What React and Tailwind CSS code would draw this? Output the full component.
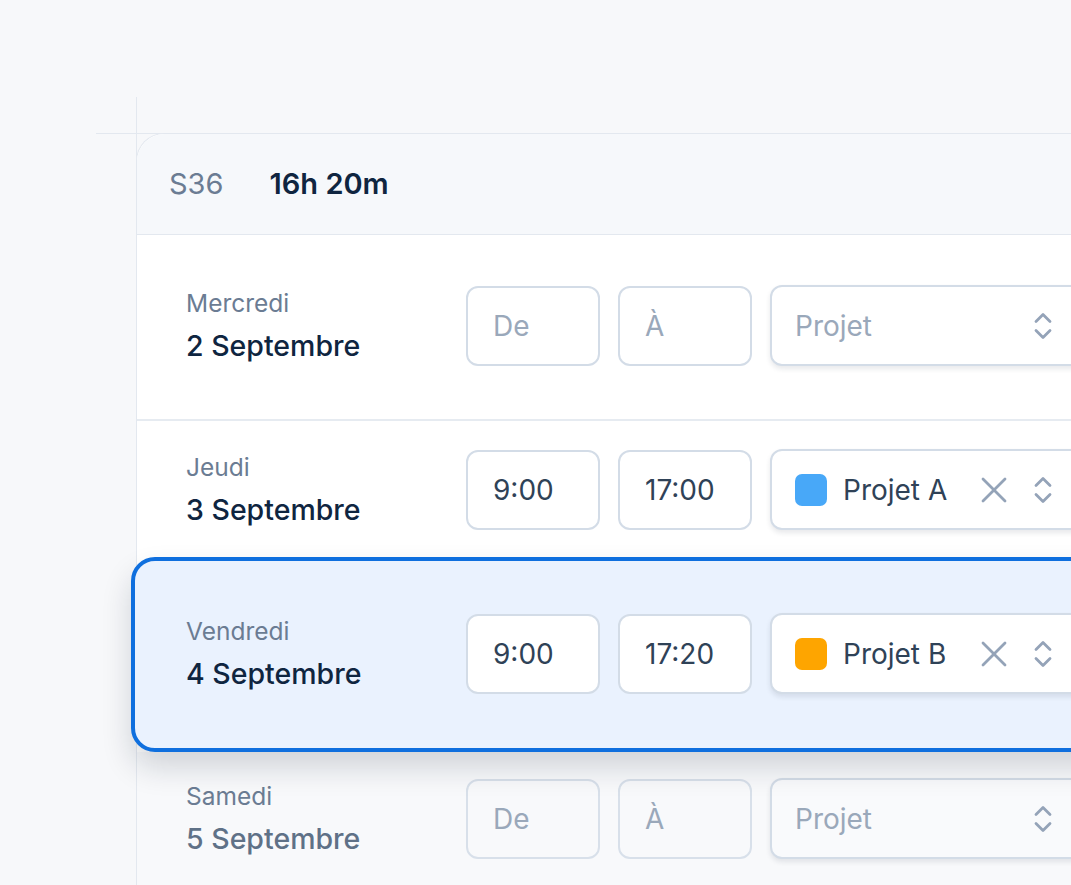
import React from "react";

const Chevrons = () => (
  <svg width="18" height="30" viewBox="0 0 18 30" fill="none" stroke="#94a3b8" strokeWidth="2.8" strokeLinecap="round" strokeLinejoin="round">
    <path d="M2 10.5 L9 3.5 L16 10.5" />
    <path d="M2 19.5 L9 26.5 L16 19.5" />
  </svg>
);

const XIcon = () => (
  <svg width="26" height="26" viewBox="0 0 26 26" fill="none" stroke="#94a3b8" strokeWidth="2.8" strokeLinecap="round">
    <path d="M2 2 L24 24" />
    <path d="M24 2 L2 24" />
  </svg>
);

function TimeBox({ value, placeholder, faded }) {
  return (
    <div
      className={
        "w-[134px] h-[80px] rounded-[12px] border-2 flex items-center pl-[25px] text-[28px] " +
        (faded ? "border-[#d8e0ea] bg-transparent" : "border-[#d3dce7] bg-white")
      }
    >
      {value ? (
        <span className="text-[#2f4257]">{value}</span>
      ) : (
        <span className="text-[#9aa8ba]">{placeholder}</span>
      )}
    </div>
  );
}

function ProjectSelect({ project, faded }) {
  return (
    <div
      className={
        "w-[320px] h-[81px] rounded-[12px] border-2 border-[#d3dce7] flex items-center pl-[23px] pr-[36px] shadow-[0_3px_5px_rgba(30,41,59,0.10)] " +
        (faded ? "bg-[#f9fafc]" : "bg-white")
      }
    >
      {project ? (
        <>
          <div className="w-[32px] h-[32px] rounded-[7px] shrink-0" style={{ background: project.color }} />
          <span className="ml-[16px] text-[28px] text-[#2f4257]">{project.name}</span>
          <div className="ml-auto flex items-center gap-[27px]">
            <XIcon />
            <Chevrons />
          </div>
        </>
      ) : (
        <>
          <span className="text-[28px] text-[#9aa8ba]">Projet</span>
          <div className="ml-auto">
            <Chevrons />
          </div>
        </>
      )}
    </div>
  );
}

function DayLabel({ day, date, faded }) {
  return (
    <div className="w-[280px] shrink-0 flex flex-col gap-[10px]">
      <span className="text-[24.5px] leading-[30px] text-[#6b7c93]">{day}</span>
      <span className={"text-[28.5px] leading-[35px] font-medium " + (faded ? "text-[#5f7187]" : "text-[#0f2540]")}>{date}</span>
    </div>
  );
}

function Row({ day, date, from, to, project, faded }) {
  return (
    <div className="flex items-center">
      <DayLabel day={day} date={date} faded={faded} />
      <div className="flex items-center gap-[18px]">
        <TimeBox value={from} placeholder="De" faded={faded} />
        <TimeBox value={to} placeholder="À" faded={faded} />
        <ProjectSelect project={project} faded={faded} />
      </div>
    </div>
  );
}

export default function App() {
  return (
    <div
      className="relative w-[1071px] h-[885px] overflow-hidden bg-[#f7f8fa] pl-[136px] pt-[133px]"
      style={{ fontFamily: "Inter, 'Noto Sans', sans-serif" }}
    >
      <div className="absolute left-[136px] top-[97px] w-px h-[100px] bg-[#e3e8ef]" />
      <div className="absolute left-[96px] top-[133px] w-[100px] h-px bg-[#e3e8ef]" />
      <div className="relative w-[1100px] h-[900px] rounded-tl-[28px] border-l border-t border-[#e3e8ef] bg-white">
        <div className="h-[101px] rounded-tl-[28px] bg-[#f6f8fb] border-b border-[#e3e8ef] flex items-center pl-[32px] gap-[46px] text-[29px]">
          <span className="text-[#6b7c93]">S36</span>
          <span className="font-semibold text-[#0f2540]">16h 20m</span>
        </div>
        <div className="h-[186px] border-b-2 border-[#e6ebf1] pl-[49px] pt-[50px]">
          <Row day="Mercredi" date="2 Septembre" />
        </div>
        <div className="h-[136px] pl-[49px] pt-[28px]">
          <Row day="Jeudi" date="3 Septembre" from="9:00" to="17:00" project={{ name: "Projet A", color: "#48a8f8" }} />
        </div>
        <div className="relative z-10 -ml-[6px] h-[195px] rounded-[24px] border-4 border-[#0f6fde] bg-[#eaf2fe] pl-[51px] pt-[52px] shadow-[0_16px_30px_rgba(15,23,42,0.16)]">
          <Row day="Vendredi" date="4 Septembre" from="9:00" to="17:20" project={{ name: "Projet B", color: "#fea500" }} />
        </div>
        <div className="h-[200px] bg-[#f8f9fb] pl-[49px] pt-[26px]">
          <Row day="Samedi" date="5 Septembre" faded />
        </div>
      </div>
    </div>
  );
}
